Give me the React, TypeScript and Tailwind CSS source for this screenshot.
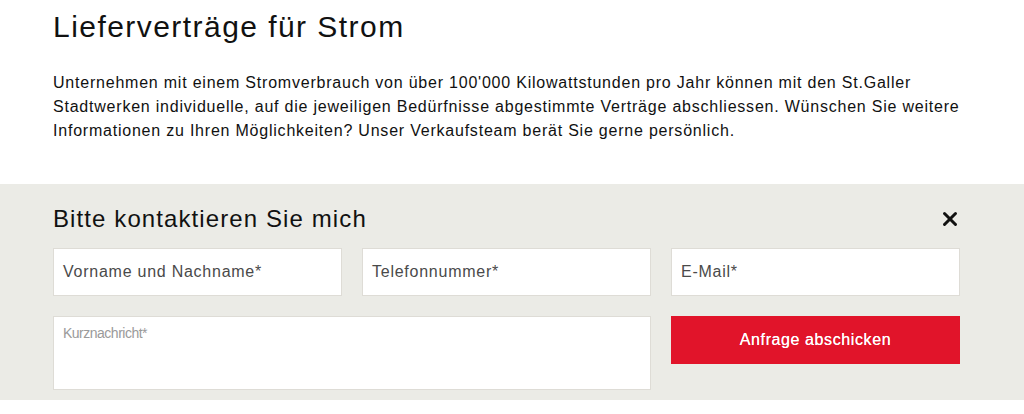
import { X } from "lucide-react";

const font = { fontFamily: '"Liberation Sans", Arial, sans-serif' };

function Field({ label }: { label: string }) {
  return (
    <div className="flex h-12 items-center border border-[#dedcd6] bg-white px-[9px] text-[16px] tracking-[0.75px] text-[#4a4a4a]">
      {label}
    </div>
  );
}

export default function App() {
  return (
    <div className="min-h-[414px] w-[1024px] bg-white text-[#111]" style={font}>
      <section className="pl-[53px] pt-[8px]">
        <h1 className="text-[30px] leading-[38px] tracking-[1.45px]">Lieferverträge für Strom</h1>
        <p className="mt-[25px] w-[910px] text-[16px] leading-[24px] tracking-[0.78px]">
          Unternehmen mit einem Stromverbrauch von über 100'000 Kilowattstunden pro Jahr können mit den St.Galler
          Stadtwerken individuelle, auf die jeweiligen Bedürfnisse abgestimmte Verträge abschliessen. Wünschen Sie weitere
          Informationen zu Ihren Möglichkeiten? Unser Verkaufsteam berät Sie gerne persönlich.
        </p>
      </section>

      <section className="mt-[41px] h-[216px] bg-[#ebebe6] pl-[53px] pt-[19px]">
        <div className="w-[907px]">
          <div className="flex items-center justify-between">
            <h2 className="text-[24px] leading-[32px] tracking-[1.1px]">Bitte kontaktieren Sie mich</h2>
            <X className="-mr-[1px] -mt-[1px] h-[22px] w-[22px]" strokeWidth={3.2} />
          </div>
          <div className="mt-[13px] grid grid-cols-3 gap-x-[20px] gap-y-[20px]">
            <Field label="Vorname und Nachname*" />
            <Field label="Telefonnummer*" />
            <Field label="E-Mail*" />
            <div className="col-span-2 h-[74px] border border-[#dedcd6] bg-white px-[9px] pt-[7px] text-[14px] leading-[18px] tracking-[-0.5px] text-[#9a9a9a]">
              Kurznachricht*
            </div>
            <button className="h-[48px] bg-[#e1142a] text-[16px] tracking-[0.6px] text-white [text-shadow:0_0_0.4px_#fff]">
              Anfrage abschicken
            </button>
          </div>
        </div>
      </section>
    </div>
  );
}
